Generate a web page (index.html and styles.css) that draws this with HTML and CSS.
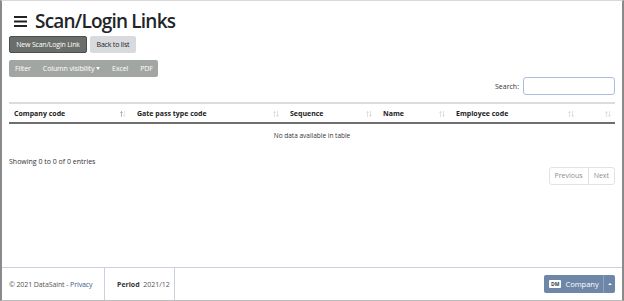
FILE: index.html
```html
<!DOCTYPE html>
<html>
<head>
<meta charset="utf-8">
<link rel="stylesheet" href="styles.css">
</head>
<body>
<div class="frame">
  <main class="content">
    <h1 class="title">
      <svg class="burger" width="13" height="11" viewBox="0 0 13 11"><rect x="0" y="0" width="13" height="2" fill="#222"/><rect x="0" y="4.5" width="13" height="2" fill="#222"/><rect x="0" y="9" width="13" height="2" fill="#222"/></svg>
      <span>Scan/Login Links</span>
    </h1>
    <div class="actions">
      <button class="btn btn-dark">New Scan/Login Link</button>
      <button class="btn btn-light">Back to list</button>
    </div>
    <div class="btn-group">
      <button class="gbtn">Filter</button>
      <button class="gbtn">Column visibility <span class="caret"></span></button>
      <button class="gbtn">Excel</button>
      <button class="gbtn">PDF</button>
    </div>
    <div class="search-row">
      <label class="search-label">Search:</label>
      <input class="search-input" type="text">
    </div>
    <table class="grid">
      <thead>
        <tr>
          <th class="c1">Company code<svg class="sort" width="6" height="6" viewBox="0 0 6 6"><path d="M1.5 6V0.5M0.3 1.8L1.5 0.5L2.7 1.8" stroke="#9a9a9a" stroke-width="0.7" fill="none"/><path d="M4.5 0V5.5M3.3 4.2L4.5 5.5L5.7 4.2" stroke="#e2e2e2" stroke-width="0.7" fill="none"/></svg></th>
          <th class="c2">Gate pass type code<svg class="sort" width="6" height="6" viewBox="0 0 6 6"><path d="M1.5 6V0.5M0.3 1.8L1.5 0.5L2.7 1.8M4.5 0V5.5M3.3 4.2L4.5 5.5L5.7 4.2" stroke="#d4d4d4" stroke-width="0.7" fill="none"/></svg></th>
          <th class="c3">Sequence<svg class="sort" width="6" height="6" viewBox="0 0 6 6"><path d="M1.5 6V0.5M0.3 1.8L1.5 0.5L2.7 1.8M4.5 0V5.5M3.3 4.2L4.5 5.5L5.7 4.2" stroke="#d4d4d4" stroke-width="0.7" fill="none"/></svg></th>
          <th class="c4">Name<svg class="sort" width="6" height="6" viewBox="0 0 6 6"><path d="M1.5 6V0.5M0.3 1.8L1.5 0.5L2.7 1.8M4.5 0V5.5M3.3 4.2L4.5 5.5L5.7 4.2" stroke="#d4d4d4" stroke-width="0.7" fill="none"/></svg></th>
          <th class="c5">Employee code<svg class="sort" width="6" height="6" viewBox="0 0 6 6"><path d="M1.5 6V0.5M0.3 1.8L1.5 0.5L2.7 1.8M4.5 0V5.5M3.3 4.2L4.5 5.5L5.7 4.2" stroke="#d4d4d4" stroke-width="0.7" fill="none"/></svg></th>
          <th class="c6"><svg class="sort" width="6" height="6" viewBox="0 0 6 6"><path d="M1.5 6V0.5M0.3 1.8L1.5 0.5L2.7 1.8M4.5 0V5.5M3.3 4.2L4.5 5.5L5.7 4.2" stroke="#d4d4d4" stroke-width="0.7" fill="none"/></svg></th>
        </tr>
      </thead>
      <tbody>
        <tr><td colspan="6" class="empty">No data available in table</td></tr>
      </tbody>
    </table>
    <div class="info-row">
      <div class="info">Showing 0 to 0 of 0 entries</div>
    </div>
    <div class="pager-row">
      <div class="pager">
        <span class="pg">Previous</span><span class="pg">Next</span>
      </div>
    </div>
  </main>
  <footer class="footer">
    <div class="fcell copy">© 2021 DataSaint -&nbsp;<a class="plink">Privacy</a></div>
    <div class="fcell period"><b>Period</b>&nbsp;&nbsp;2021/12</div>
    <div class="fspacer"></div>
    <div class="company">
      <span class="cmain"><span class="dm">DM</span>Company</span><span class="csplit"><span class="ccaret"></span></span>
    </div>
  </footer>
</div>
</body>
</html>
```
FILE: styles.css
```css
* { box-sizing: border-box; }
html, body { margin: 0; padding: 0; }
body {
  width: 624px; height: 301px; overflow: hidden; background: #fff;
  font-family: "Segoe UI", "Open Sans", "Noto Sans", sans-serif; color: #212529;
}
.frame {
  width: 624px; height: 301px;
  border-top: 1px solid #d9d9d9;
  border-left: 2px solid #8a8a8a;
  border-right: 2px solid #8a8a8a;
  border-bottom: 1px solid #bdbdbd;
  display: flex; flex-direction: column;
}
.content { flex: 1; padding: 0 7px 0 7px; display: flex; flex-direction: column; }
.title {
  margin: 6px 0 0 5px; display: flex; align-items: center; gap: 8px;
  font-size: 19px; font-weight: 600; color: #212529; height: 27px; letter-spacing: -0.8px;
  white-space: nowrap;
}
.burger { margin-top: 2px; }
.actions { display: flex; gap: 3px; margin-top: 2px; }
.btn {
  font-family: inherit; font-size: 7px; height: 17px; padding: 0 4px; border-radius: 2px;
  border: 1px solid transparent; line-height: 15px; white-space: nowrap; letter-spacing: -0.2px;
}
.btn-dark { background: #6a6e6a; border-color: #4c504c; color: #fff; width: 78px; }
.btn-light { background: #d8dadd; border-color: #d8dadd; color: #222; width: 46px; padding: 0 2px; }
.btn-group {
  display: flex; margin-top: 7px; background: #a2a6a2; border-radius: 2px; width: 149px; height: 17px;
  align-items: center; padding-left: 0; white-space: nowrap;
}
.gbtn {
  font-family: inherit; font-size: 7px; color: #fff; background: transparent; border: 0;
  padding: 0 6px; height: 17px; line-height: 17px; white-space: nowrap; letter-spacing: -0.1px;
}
.caret {
  display: inline-block; width: 0; height: 0; border-left: 2.5px solid transparent; border-right: 2.5px solid transparent;
  border-top: 3px solid #fff; vertical-align: 1px;
}
.search-row { display: flex; justify-content: flex-end; align-items: center; margin-top: 0; gap: 4px; }
.search-label { font-size: 7px; color: #333; }
.search-input {
  width: 92px; height: 18px; border: 1px solid #a8bedc; border-radius: 3px; padding: 0; margin: 0;
}
.grid {
  width: 606px; margin-top: 7px; border-collapse: collapse; font-size: 7px;
  border-top: 2px solid #dcdcdc; table-layout: fixed;
}
.grid th {
  text-align: left; font-weight: 700; color: #222; height: 20px; padding: 0 0 0 5px; position: relative;
  border-bottom: 2px solid #6f6f6f; vertical-align: middle; white-space: nowrap;
}
.sort { position: absolute; right: 6px; top: 7px; }
.c1 { width: 123px; } .c2 { width: 153px; } .c3 { width: 93px; } .c4 { width: 73px; } .c5 { width: 129px; } .c6 { width: 35px; }
.c6 .sort { right: 4px; }
.empty { text-align: center; font-size: 6.5px; color: #333; height: 23px; padding: 0; vertical-align: middle; }
.info-row { margin-top: 11px; }
.info { font-size: 7px; color: #333; }
.pager-row { display: flex; justify-content: flex-end; margin-top: 1px; }
.pager { display: flex; border: 1px solid #e2e2e2; border-radius: 3px; height: 18px; }
.pg { font-size: 7px; color: #8e8e8e; padding: 0 5px; line-height: 16px; }
.pg + .pg { border-left: 1px solid #e2e2e2; }
.footer {
  height: 33px; border-top: 1px solid #c9d1de; display: flex; align-items: stretch; font-size: 7px; color: #555;
  white-space: nowrap;
}
.fcell { display: flex; align-items: center; padding: 0 8px; border-right: 1px solid #c9d1de; }
.copy { width: 103px; padding-left: 7px; letter-spacing: -0.1px; }
.plink { color: #3a5a8a; }
.period { width: 70px; padding-left: 12px; }
.period b { color: #333; }
.fspacer { flex: 1; }
.company {
  display: flex; align-self: center; height: 18px; margin-right: 7px; border-radius: 2px; overflow: hidden;
  background: #6e86a8; color: #fff; font-size: 7.5px;
}
.cmain { display: flex; align-items: center; padding: 0 4px 0 5px; gap: 2px; width: 59px; }
.dm { background: #fff; color: #2d3e58; font-size: 5px; font-weight: 700; padding: 1px 2px; border-radius: 1px; margin-right: 2px; }
.csplit { width: 12px; display: flex; align-items: center; justify-content: center; border-left: 1px solid #8fa3c0; }
.ccaret { width: 0; height: 0; border-left: 2px solid transparent; border-right: 2px solid transparent; border-bottom: 2.5px solid #fff; }
```
